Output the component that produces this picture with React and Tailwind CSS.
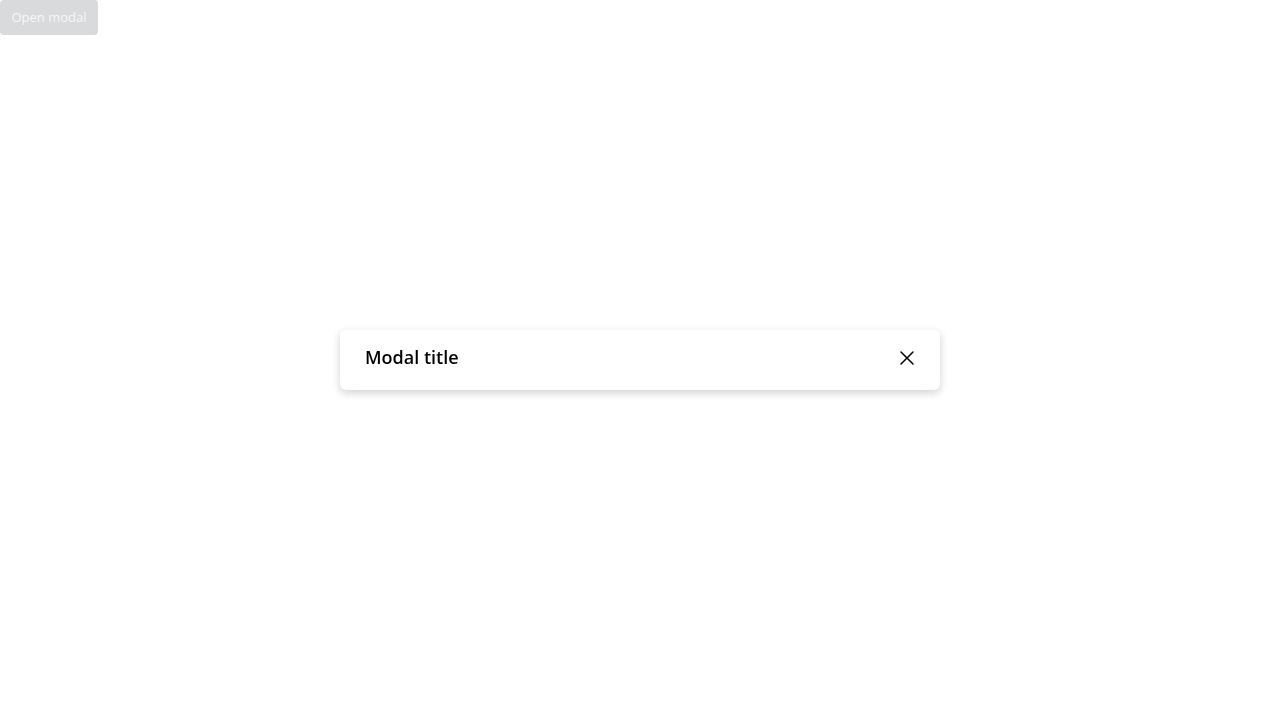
import { X } from "lucide-react";

export default function App() {
  return (
    <div className="relative h-[720px] w-full bg-white font-['Open_Sans',sans-serif]">
      <button
        disabled
        className="h-[35px] w-[98px] rounded-[4px] bg-[#d9dadb] text-[13px] text-[#f7f7f7]"
      >
        Open modal
      </button>

      {/* Modal */}
      <div className="fixed inset-0 flex items-center justify-center">
        <div className="flex h-[60px] w-[600px] items-start justify-between rounded-[6px] bg-white pl-[25px] pr-[21px] pt-[15px] shadow-[0_3px_8px_rgba(0,0,0,0.18)]">
          <h2 className="text-[18px] font-semibold leading-[24px] text-black">Modal title</h2>
          <button className="mt-[1px] flex h-6 w-6 items-center justify-center text-black">
            <X size={24} strokeWidth={1.5} />
          </button>
        </div>
      </div>
    </div>
  );
}
